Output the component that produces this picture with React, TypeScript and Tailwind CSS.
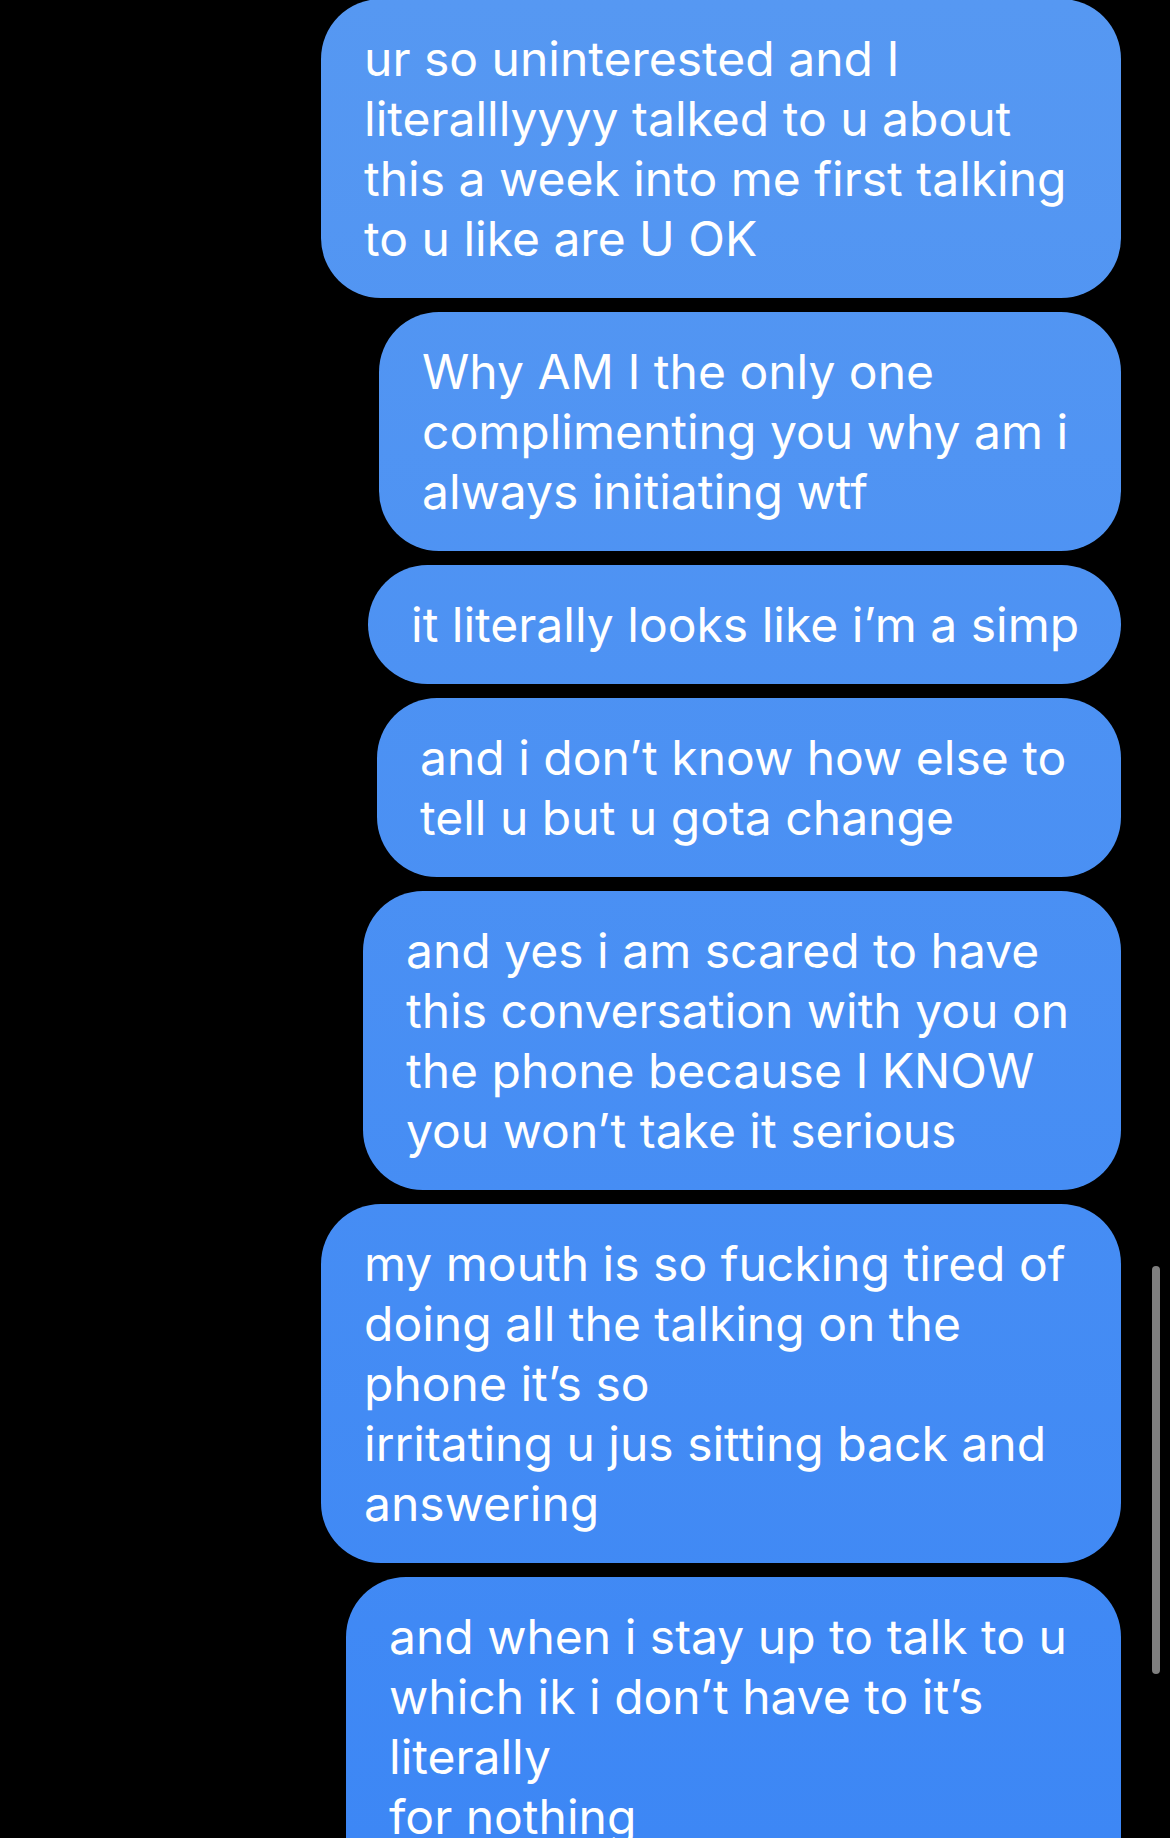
const messages: { width: string; lines: string[] }[] = [
  {
    width: "w-[800px]",
    lines: [
      "ur so uninterested and I",
      "literalllyyyy talked to u about",
      "this a week into me first talking",
      "to u like are U OK",
    ],
  },
  {
    width: "w-[742px]",
    lines: ["Why AM I the only one", "complimenting you why am i", "always initiating wtf"],
  },
  { width: "w-[753px]", lines: ["it literally looks like i’m a simp"] },
  { width: "w-[744px]", lines: ["and i don’t know how else to", "tell u but u gota change"] },
  {
    width: "w-[758px]",
    lines: [
      "and yes i am scared to have",
      "this conversation with you on",
      "the phone because I KNOW",
      "you won’t take it serious",
    ],
  },
  {
    width: "w-[800px]",
    lines: [
      "my mouth is so fucking tired of",
      "doing all the talking on the",
      "phone it’s so",
      "irritating u jus sitting back and",
      "answering",
    ],
  },
  {
    width: "w-[775px]",
    lines: ["and when i stay up to talk to u", "which ik i don’t have to it’s", "literally", "for nothing", ""],
  },
];

function Bubble({ width, lines }: { width: string; lines: string[] }) {
  return (
    <div
      className={`${width} shrink-0 rounded-[60px] bg-fixed bg-linear-to-b from-[#5698f2] to-[#3d87f5] px-[43px] py-[29.5px] text-white`}
    >
      {lines.map((l, i) => (
        <div key={i} className="h-[60px] whitespace-nowrap text-[48px] leading-[60px]">
          {l}
        </div>
      ))}
    </div>
  );
}

export default function App() {
  return (
    <div className="relative h-[1838px] w-[1170px] overflow-hidden bg-black font-['Inter','Noto_Sans',sans-serif]">
      <div className="-mt-px flex flex-col items-end gap-[14px] pr-[49px]">
        {messages.map((m, i) => (
          <Bubble key={i} width={m.width} lines={m.lines} />
        ))}
      </div>
      <div className="absolute left-[1152px] top-[1266px] h-[408px] w-[8px] rounded-full bg-[#7f7f7f]" />
    </div>
  );
}
